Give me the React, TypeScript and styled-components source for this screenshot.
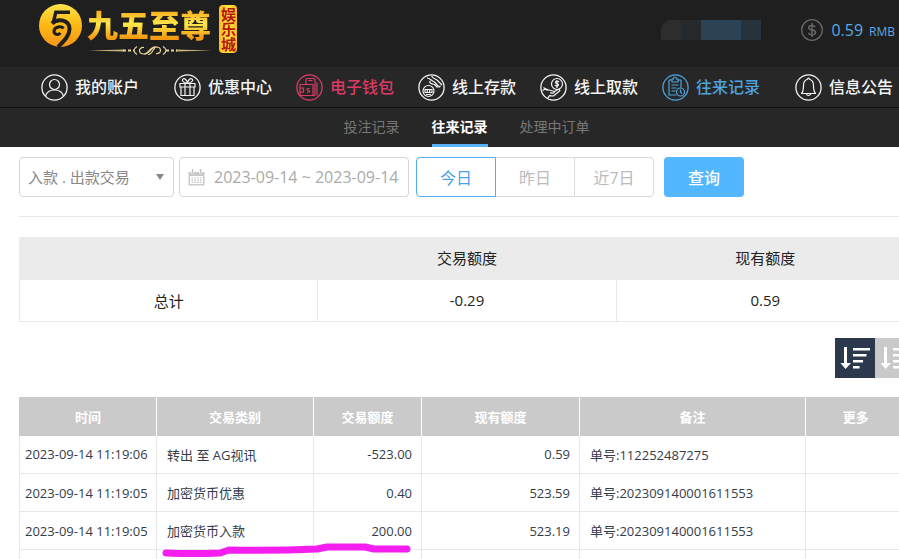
import React from 'react';
import styled, { createGlobalStyle, css } from 'styled-components';

const GlobalStyle = createGlobalStyle`
  * { box-sizing: border-box; }
  body {
    margin: 0;
    background: #fff;
    font-family: 'Open Sans', 'Noto Sans CJK SC', sans-serif;
    font-size: 13px;
    color: #333c4a;
  }
  button, input, select { font-family: inherit; }
`;

const Page = styled.div`
  height: 100vh;
  overflow: hidden;
`;

const Header = styled.header`
  display: flex;
  align-items: flex-start;
  justify-content: space-between;
  height: 67px;
  padding: 0 4px 0 38px;
  background: #1f1f1f;
`;

const Brand = styled.a`
  display: flex;
  align-items: flex-start;
  padding-top: 4px;
  text-decoration: none;
`;

const BrandText = styled.span`
  display: flex;
  flex-direction: column;
  margin: 0 6px 0 4px;
`;

const BrandName = styled.span`
  font-family: 'Noto Sans CJK SC', sans-serif;
  font-size: 31px;
  font-weight: 900;
  line-height: 40px;
  color: transparent;
  background: linear-gradient(#f5a81c 15%, #ffe94a 50%, #f39a10 85%);
  background-clip: text;
  -webkit-background-clip: text;
`;

const Plaque = styled.span`
  width: 18px;
  height: 48px;
  margin-top: 1px;
  border-radius: 4px;
  background: linear-gradient(90deg, #fbb91d, #ffe743 50%, #fbb91d);
  color: #b8160c;
  font-family: 'Noto Sans CJK SC', sans-serif;
  font-size: 15px;
  font-weight: 700;
  line-height: 18px;
  writing-mode: vertical-rl;
  text-align: center;
`;

const Account = styled.div`
  display: flex;
  align-items: center;
  height: 60px;
`;

const MaskedName = styled.span`
  display: flex;
  width: 100px;
  height: 20px;
  margin-right: 40px;
  overflow: hidden;
  border-top-left-radius: 10px;
`;

const Tile = styled.i<{ $tone: string }>`
  flex: 1;
  background: ${(p) => p.$tone};
`;

const Balance = styled.span`
  display: flex;
  align-items: baseline;
  gap: 6px;
  margin-left: 8px;
  color: #57a9e6;
  font-size: 16px;
  small { font-size: 12px; }
`;

const Nav = styled.nav`
  display: flex;
  align-items: center;
  gap: 24px;
  min-width: 899px;
  height: 41px;
  padding: 0 0 0 41px;
  background: #272727;
  border-bottom: 1px solid #111;
`;

const tones = { plain: '#f4f4f4', red: '#dc3a65', blue: '#4fa3dd' };

const NavLink = styled.a<{ $tone: keyof typeof tones; $edge?: 'first' | 'last' }>`
  display: flex;
  align-items: center;
  gap: 7px;
  color: ${(p) => tones[p.$tone]};
  font-size: 16px;
  font-weight: 500;
  line-height: 24px;
  white-space: nowrap;
  text-decoration: none;
  ${(p) => p.$edge === 'first' && css`margin-right: 11px;`}
  ${(p) => p.$edge === 'last' && css`margin-left: 11px;`}
  svg { flex: none; }
`;

const SubNav = styled.nav`
  display: flex;
  justify-content: center;
  gap: 32px;
  height: 39px;
  padding-left: 34px;
  background: #272727;
`;

const SubLink = styled.a<{ $active?: boolean }>`
  font-size: 14px;
  line-height: 38px;
  height: 39px;
  color: ${(p) => (p.$active ? '#fff' : '#777')};
  font-weight: ${(p) => (p.$active ? 700 : 400)};
  text-decoration: none;
  border-bottom: 3px solid ${(p) => (p.$active ? '#57b2f8' : 'transparent')};
`;

const Content = styled.main`
  min-width: 915px;
  padding: 10px 0 0 19px;
`;

const Filters = styled.form`
  display: flex;
  padding-bottom: 19px;
  border-bottom: 1px solid #e8e8e8;
`;

const Field = styled.label<{ $width: number }>`
  display: flex;
  align-items: center;
  width: ${(p) => p.$width}px;
  height: 40px;
  margin-right: 5px;
  padding: 0 8px;
  border: 1px solid #d6d6d6;
  border-radius: 4px;
  svg { flex: none; }
`;

const KindSelect = styled.select`
  flex: 1;
  min-width: 0;
  padding: 0;
  border: 0;
  outline: 0;
  appearance: none;
  background: transparent;
  color: #888;
  font-size: 15px;
`;

const DateInput = styled.input`
  flex: 1;
  min-width: 0;
  padding: 0 0 0 9px;
  border: 0;
  outline: 0;
  background: transparent;
  color: #aaa;
  font-size: 16px;
`;

const RangeGroup = styled.div`
  display: flex;
  margin: 0 10px 0 2px;
`;

const RangeButton = styled.button<{ $active?: boolean }>`
  width: 80px;
  height: 40px;
  padding: 0;
  background: #fff;
  border: 1px solid ${(p) => (p.$active ? '#52aef3' : '#d9d9d9')};
  color: ${(p) => (p.$active ? '#4aa3e6' : '#bbb')};
  font-size: 16px;
  z-index: ${(p) => (p.$active ? 1 : 0)};
  & + & { margin-left: -1px; }
  &:first-child { border-radius: 4px 0 0 4px; }
  &:last-child { border-radius: 0 4px 4px 0; }
`;

const QueryButton = styled.button`
  width: 80px;
  height: 40px;
  padding: 0;
  border: 0;
  border-radius: 4px;
  background: #53b7ff;
  color: #fff;
  font-size: 16px;
  font-weight: 500;
`;

const SummaryTable = styled.table`
  width: 100%;
  margin-top: 20px;
  table-layout: fixed;
  border-collapse: collapse;
  color: #222;
  font-size: 15px;
  text-align: center;
  th {
    height: 42px;
    padding: 0;
    background: #ebebeb;
    border: 1px solid #ebebeb;
    border-top: 0;
    font-weight: 400;
  }
  td {
    height: 42px;
    padding: 0;
    border: 1px solid #e8e8e8;
  }
`;

const SortBar = styled.div`
  display: flex;
  justify-content: flex-end;
  margin: 16px 0 19px;
`;

const SortButton = styled.button<{ $active?: boolean }>`
  width: 40px;
  height: 40px;
  padding: 0;
  border: 0;
  background: ${(p) => (p.$active ? '#2c394d' : '#c9c9c9')};
  svg { display: block; }
`;

const Records = styled.div`
  position: relative;
  width: 886px;
`;

const RecordTable = styled.table`
  width: 100%;
  table-layout: fixed;
  border-collapse: collapse;
  th {
    height: 39px;
    padding: 0;
    background: #cacaca;
    color: #fff;
    font-weight: 700;
  }
  th:first-child { border-left: 1px solid #cacaca; }
  th + th { border-left: 1px solid #fff; }
  td { white-space: nowrap; }
`;

const Cell = styled.td<{ $align?: 'left' | 'right' }>`
  height: 38px;
  padding: 0 9px 0 ${(p) => (p.$align ? 10 : 5)}px;
  ${(p) => !p.$align && css`padding-right: 0;`}
  border: 1px solid #e8e8e8;
  border-top: 0;
  text-align: ${(p) => p.$align ?? 'left'};
`;

const Marker = styled.svg`
  position: absolute;
  left: 143px;
  top: 145px;
  pointer-events: none;
`;

const art: Record<string, React.ReactNode> = {
  user: (
    <>
      <circle cx="13.5" cy="10.5" r="5" />
      <path d="M4.500 22c1.200-4 4.200-6 9-6s7.800 2 9 6" />
    </>
  ),
  gift: (
    <>
      <path d="M6 9.500h15v3.500H6zM7 13h13v8.500H7zM11 9.500v12M16 9.500v12M13.500 9c-1-3.500-3-5-4.500-4s-.5 3.500 4.500 4.500c5-1 6-3.500 4.500-4.500s-3.500.5-4.500 4" />
    </>
  ),
  wallet: (
    <>
      <path d="M10 10V5.500q0-1 1-1h7q1 0 1 1v15q0 1-1 1h-1M12.500 6.500h4M4 10.500h13v11H4zM4 14h3.500v4H4M21 8.500v13" />
      <path d="M13.500 14.500h-2.500v1.800h2.500v1.800h-2.500" strokeWidth="1" />
    </>
  ),
  deposit: (
    <>
      <circle cx="10.500" cy="17" r="5.500" />
      <path d="M7 15.500h7v3H7zM9.300 15.500v3M11.700 15.500v3M8 20.500h5" />
      <path d="M9 4c3 0 4.500 3 7.500 4l4 4.500c1 1 2 0 1.300-1M13.500 2c1.500 2.500 3.500 3 5.500 4l5 5M12.500 7c-1.500.5-.5 2.500 1 2.700l3 .8 3 3" />
    </>
  ),
  withdraw: (
    <>
      <circle cx="17" cy="10" r="5.500" />
      <path d="M19 8q-1-1-2.500-.700c-1.500.3-1.300 2 .3 2.300 1.900.3 2.300 1.900.6 2.400-1.100.3-2-.1-2.600-.800M17 6v8" />
      <path d="M2.500 16.500c2-1.500 4-2 6-.500l4.500 1c1.800.5 1.500 2.300 0 2.200l-3-.4M13.500 18l4.500-2.500c1.500-.8 2.500.8 1.200 1.800L13.500 22l-4-.4-2 3M3.500 13.500l4 3" />
    </>
  ),
  records: (
    <>
      <path d="M10 6H7v15h7.500M16 6h3v7.500M10 5h1.500q0-2 1.500-2t1.500 2H16v3h-6zM9.500 11h7M9.500 14h5M9.500 17h4" />
      <circle cx="18.500" cy="18" r="4" />
      <path d="M18.500 15.500V18l1.500 1.500" />
    </>
  ),
  bell: (
    <path d="M6.500 19.500c1.700-2 2-4 2-8 0-3.500 1.700-5.500 4-6.200 0-1.700 2-1.700 2 0 2.300.7 4 2.700 4 6.200 0 4 .3 6 2 8zM11.500 20c.3 2 3.700 2 4 0" />
  ),
};

const NavIcon = ({ name }: { name: string }) => (
  <svg width="27" height="27" viewBox="0 0 27 27" fill="none" stroke="currentColor" strokeWidth="1.200" strokeLinejoin="round" aria-hidden="true">
    <circle cx="13.500" cy="13.500" r="12.600" strokeWidth="1.300" />
    {art[name]}
  </svg>
);

const LogoMark = () => (
  <svg width="45" height="44" viewBox="0 0 45 44" aria-hidden="true">
    <defs>
      <linearGradient id="coin" x1="0" y1="0" x2="0" y2="1">
        <stop offset="0" stopColor="#ffe44a" />
        <stop offset=".5" stopColor="#fdb813" />
        <stop offset="1" stopColor="#f7941d" />
      </linearGradient>
    </defs>
    <circle cx="22.500" cy="21.500" r="21.500" fill="url(#coin)" />
    <g fill="none" stroke="#1f1f1f">
      <path d="M32 8.300H17.800L15.300 18.500" strokeWidth="3.400" />
      <path d="M14 19.500c6-6 18-3.500 17.500 6 -.3 6.500-5 11-11.500 17.500" strokeWidth="4" />
      <path d="M25.500 24.500c-2-3-9-2-9.500 2.500-.3 3.500 4 4.500 6.500 2" strokeWidth="3" />
    </g>
  </svg>
);

const Flourish = () => (
  <svg width="126" height="12" viewBox="0 0 126 12" fill="none" stroke="#e5d49a" aria-hidden="true">
    <path d="M1 6.500l36-1v2zM125 6.500l-36-1v2z" fill="#c8b47a" stroke="none" />
    <path d="M36 6.500h11M79 6.500h11" strokeWidth="2" strokeDasharray="3 2" />
    <path d="M50 2.500q-6 4 0 8M76 2.500q6 4 0 8M69 3c-5-2-7 7-12 7-6 0-6-7 0-6.500M57 10c5 1 7-7 12-7 6 0 6 7 0 6.500M61 10.500c5 0 5-7.500 9-8" strokeWidth="1.200" />
  </svg>
);

const CoinIcon = () => (
  <svg width="22" height="22" viewBox="0 0 22 22" fill="none" stroke="#686868" aria-hidden="true">
    <circle cx="11" cy="11" r="10.300" strokeWidth="1.300" />
    <path d="M14.300 8.300c-.6-1.300-1.700-1.900-3.300-1.900-4.300 0-4.300 4.200 0 4.600 4.700.4 4.600 4.900 0 4.900-1.800 0-3-.7-3.600-2.100M11 4v14" strokeWidth="1.500" />
  </svg>
);

const CalendarIcon = () => (
  <svg width="17" height="17" viewBox="0 0 17 17" aria-hidden="true">
    <path d="M.5 3h16v13.500H.5z" fill="#c9c9c9" />
    <path d="M2 7h13v8H2z" fill="#fff" />
    <path d="M4.500.5v4M12.500.5v4" stroke="#fff" strokeWidth="3" />
    <path d="M4.500 0v4.500M12.500 0v4.500" stroke="#c0c0c0" strokeWidth="1.500" />
    <path d="M3.500 9h10M3.500 11.200h10M3.500 13.400h10" stroke="#c4c4c4" strokeWidth="1.200" strokeDasharray="1.600 1.200" />
  </svg>
);

const SortIcon = () => (
  <svg width="40" height="40" viewBox="0 0 40 40" fill="#fff" aria-hidden="true">
    <path d="M9 9h3v16h4l-5.500 6L5.500 25H9zM18 10h17v2.500H18zM18 16h13.500v2.500H18zM18 22h10v2.500H18zM18 28h6.500v2.500H18z" />
  </svg>
);

const navItems: { icon: string; label: string; tone: keyof typeof tones }[] = [
  { icon: 'user', label: '我的账户', tone: 'plain' },
  { icon: 'gift', label: '优惠中心', tone: 'plain' },
  { icon: 'wallet', label: '电子钱包', tone: 'red' },
  { icon: 'deposit', label: '线上存款', tone: 'plain' },
  { icon: 'withdraw', label: '线上取款', tone: 'plain' },
  { icon: 'records', label: '往来记录', tone: 'blue' },
  { icon: 'bell', label: '信息公告', tone: 'plain' },
];

const columns = [
  { label: '时间', width: 137 },
  { label: '交易类别', width: 157 },
  { label: '交易额度', width: 108 },
  { label: '现有额度', width: 158 },
  { label: '备注', width: 226 },
  { label: '更多', width: 100 },
];

const records = [
  ['2023-09-14 11:19:06', '转出 至 AG视讯', '-523.00', '0.59', '单号:112252487275'],
  ['2023-09-14 11:19:05', '加密货币优惠', '0.40', '523.59', '单号:202309140001611553'],
  ['2023-09-14 11:19:05', '加密货币入款', '200.00', '523.19', '单号:202309140001611553'],
  ['', '', '', '', ''],
];

export default function App() {
  return (
    <Page>
      <GlobalStyle />
      <Header>
        <Brand href="#">
          <LogoMark />
          <BrandText>
            <BrandName>九五至尊</BrandName>
            <Flourish />
          </BrandText>
          <Plaque>娱乐城</Plaque>
        </Brand>
        <Account>
          <MaskedName aria-hidden="true">
            {['#2d2d2d', '#262a2d', '#2b4355', '#2b4355', '#26333d'].map((tone, i) => (
              <Tile key={i} $tone={tone} />
            ))}
          </MaskedName>
          <CoinIcon />
          <Balance>0.59 <small>RMB</small></Balance>
        </Account>
      </Header>
      <Nav>
        {navItems.map((item, i) => (
          <NavLink
            key={item.icon}
            href="#"
            $tone={item.tone}
            $edge={i === 0 ? 'first' : i === navItems.length - 1 ? 'last' : undefined}
          >
            <NavIcon name={item.icon} />
            {item.label}
          </NavLink>
        ))}
      </Nav>
      <SubNav>
        <SubLink href="#">投注记录</SubLink>
        <SubLink href="#" $active>往来记录</SubLink>
        <SubLink href="#">处理中订单</SubLink>
      </SubNav>
      <Content>
        <Filters onSubmit={(e) => e.preventDefault()}>
          <Field $width={155}>
            <KindSelect aria-label="交易类型">
              <option>入款 . 出款交易</option>
            </KindSelect>
            <svg width="10" height="8" viewBox="0 0 10 8" aria-hidden="true">
              <path d="M1 1h8L5 7z" fill="#888" />
            </svg>
          </Field>
          <Field $width={230}>
            <CalendarIcon />
            <DateInput aria-label="日期" defaultValue="2023-09-14 ~ 2023-09-14" />
          </Field>
          <RangeGroup>
            <RangeButton type="button" $active>今日</RangeButton>
            <RangeButton type="button">昨日</RangeButton>
            <RangeButton type="button">近7日</RangeButton>
          </RangeGroup>
          <QueryButton type="submit">查询</QueryButton>
        </Filters>
        <SummaryTable>
          <thead>
            <tr>
              <th />
              <th>交易额度</th>
              <th>现有额度</th>
            </tr>
          </thead>
          <tbody>
            <tr>
              <td>总计</td>
              <td>-0.29</td>
              <td>0.59</td>
            </tr>
          </tbody>
        </SummaryTable>
        <SortBar>
          <SortButton type="button" aria-label="降序" $active><SortIcon /></SortButton>
          <SortButton type="button" aria-label="升序"><SortIcon /></SortButton>
        </SortBar>
        <Records>
          <RecordTable>
            <colgroup>
              {columns.map((c) => <col key={c.label} width={c.width} />)}
            </colgroup>
            <thead>
              <tr>{columns.map((c) => <th key={c.label}>{c.label}</th>)}</tr>
            </thead>
            <tbody>
              {records.map(([time, kind, amount, balance, note], i) => (
                <tr key={i}>
                  <Cell>{time}</Cell>
                  <Cell $align="left">{kind}</Cell>
                  <Cell $align="right">{amount}</Cell>
                  <Cell $align="right">{balance}</Cell>
                  <Cell $align="left">{note}</Cell>
                  <Cell />
                </tr>
              ))}
            </tbody>
          </RecordTable>
          <Marker width="254" height="18" viewBox="0 0 254 18" aria-hidden="true">
            <path
              d="M4 11q28 1 54 0l9-3q45 1 88-1l10-2h38l9 2h33"
              fill="none"
              stroke="#f41fee"
              strokeWidth="7"
              strokeLinecap="round"
              strokeLinejoin="round"
            />
          </Marker>
        </Records>
      </Content>
    </Page>
  );
}
